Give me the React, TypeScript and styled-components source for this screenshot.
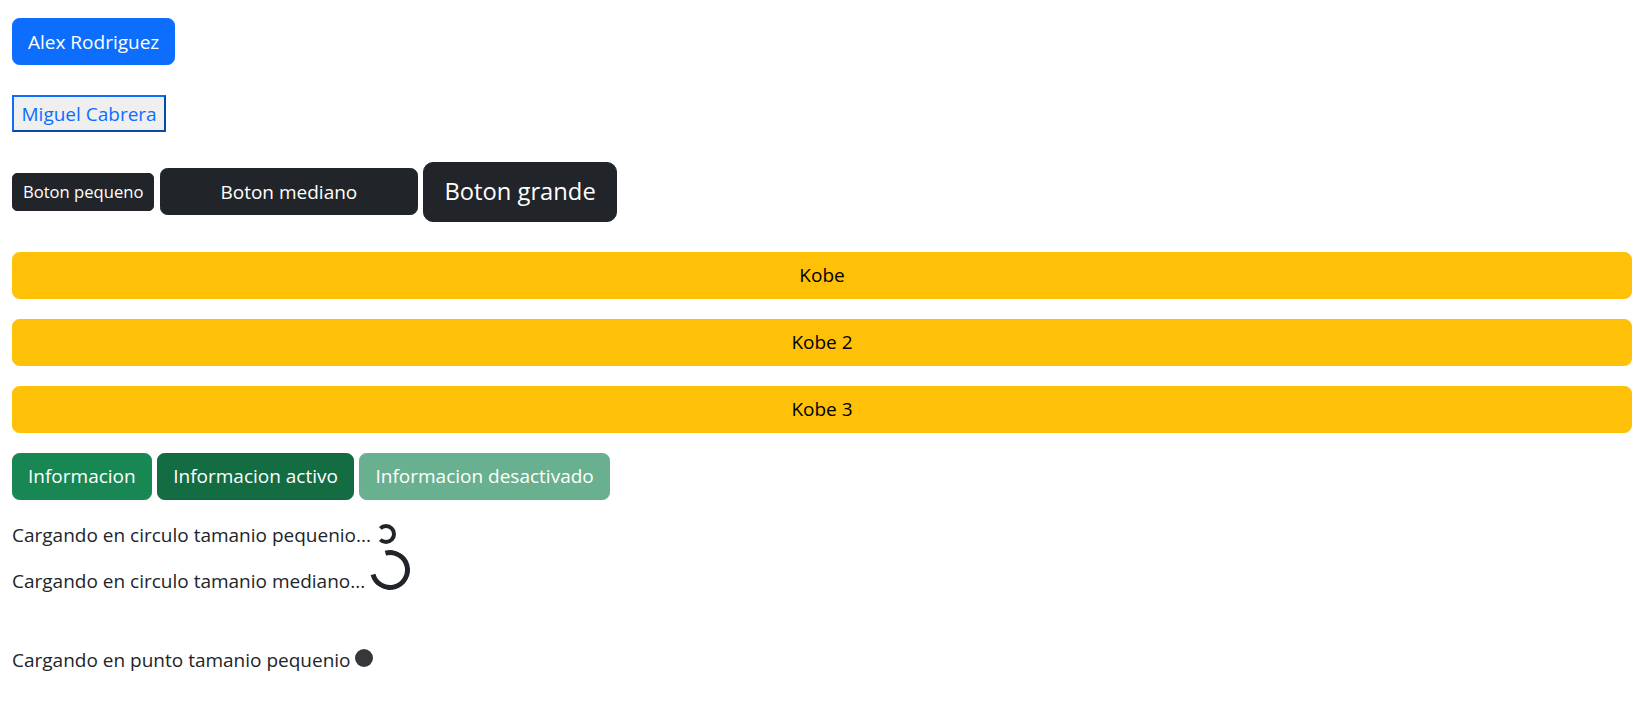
import React from "react";
import styled, { createGlobalStyle, css } from "styled-components";

const GlobalStyle = createGlobalStyle`
  html, body {
    margin: 0;
    padding: 0;
    background: #ffffff;
  }
  body {
    font-family: "Segoe UI", "Open Sans", "Noto Sans", sans-serif;
    font-size: 19px;
    line-height: 30px;
    color: #212529;
  }
  *, *::before, *::after { box-sizing: border-box; }
`;

const Page = styled.div`
  padding: 18px 13px 40px 12px;
  display: flex;
  flex-direction: column;
  align-items: flex-start;
`;

type Variant = "primary" | "dark" | "warning" | "success" | "successActive" | "successDisabled";
type Size = "sm" | "md" | "lg";

const variants: Record<Variant, ReturnType<typeof css>> = {
  primary: css`
    background: #0d6efd;
    border-color: #0d6efd;
    color: #ffffff;
  `,
  dark: css`
    background: #212529;
    border-color: #212529;
    color: #ffffff;
  `,
  warning: css`
    background: #ffc107;
    border-color: #ffc107;
    color: #000000;
  `,
  success: css`
    background: #198754;
    border-color: #198754;
    color: #ffffff;
  `,
  successActive: css`
    background: #146c43;
    border-color: #13653f;
    color: #ffffff;
  `,
  successDisabled: css`
    background: #198754;
    border-color: #198754;
    color: #ffffff;
    opacity: 0.65;
  `,
};

const sizes: Record<Size, ReturnType<typeof css>> = {
  sm: css`
    font-size: 16.6px;
    line-height: 26.25px;
    padding: 5px 10px;
    border-radius: 5px;
  `,
  md: css`
    font-size: 19px;
    line-height: 30px;
    padding: 7.5px 15px;
    border-radius: 7.5px;
  `,
  lg: css`
    font-size: 23.75px;
    line-height: 37.5px;
    padding: 10px 20px;
    border-radius: 10px;
  `,
};

const Btn = styled.button<{ $variant: Variant; $size?: Size; $block?: boolean; $width?: number }>`
  display: ${(p) => (p.$block ? "block" : "inline-block")};
  width: ${(p) => (p.$block ? "100%" : p.$width ? `${p.$width}px` : "auto")};
  font-family: inherit;
  font-weight: 400;
  text-align: center;
  border: 1px solid transparent;
  cursor: pointer;
  margin: 0;
  ${(p) => sizes[p.$size ?? "md"]}
  ${(p) => variants[p.$variant]}
`;

const PlainButton = styled.button`
  font-family: inherit;
  font-size: 19px;
  line-height: 30px;
  padding: 1.5px 7.5px;
  margin: 0;
  background: #efefef;
  color: #0d6efd;
  border: 2px outset #0d6efd;
  border-radius: 0;
`;

const Section = styled.div<{ $mb: number }>`
  margin-bottom: ${(p) => p.$mb}px;
`;

const Row = styled.div<{ $mb: number }>`
  display: flex;
  align-items: center;
  gap: 5.5px;
  margin-bottom: ${(p) => p.$mb}px;
`;

const Stack = styled.div`
  width: 100%;
  display: flex;
  flex-direction: column;
  gap: 20px;
  margin-bottom: 20px;
`;

const TextBlock = styled.div`
  font-size: 19px;
  line-height: 30px;
  color: #212529;
`;

const Line = styled.div<{ $mt?: number }>`
  margin-top: ${(p) => p.$mt ?? 0}px;
`;

const SpinnerBorder = styled.span<{ $size: number; $stroke: number; $rotate: number }>`
  display: inline-block;
  width: ${(p) => p.$size}px;
  height: ${(p) => p.$size}px;
  vertical-align: -2.5px;
  border: ${(p) => p.$stroke}px solid #212529;
  border-right-color: transparent;
  border-radius: 50%;
  transform: rotate(${(p) => p.$rotate}deg);
`;

const SpinnerGrow = styled.span`
  display: inline-block;
  width: 18px;
  height: 18px;
  vertical-align: 0;
  border-radius: 50%;
  background: #36373b;
`;

export default function App() {
  return (
    <>
      <GlobalStyle />
      <Page>
        <Section $mb={30}>
          <Btn $variant="primary">Alex Rodriguez</Btn>
        </Section>
        <Section $mb={30}>
          <PlainButton>Miguel Cabrera</PlainButton>
        </Section>
        <Row $mb={30}>
          <Btn $variant="dark" $size="sm">Boton pequeno</Btn>
          <Btn $variant="dark" $width={258}>Boton mediano</Btn>
          <Btn $variant="dark" $size="lg">Boton grande</Btn>
        </Row>
        <Stack>
          <Btn $variant="warning" $block>Kobe</Btn>
          <Btn $variant="warning" $block>Kobe 2</Btn>
          <Btn $variant="warning" $block>Kobe 3</Btn>
        </Stack>
        <Row $mb={20}>
          <Btn $variant="success">Informacion</Btn>
          <Btn $variant="successActive">Informacion activo</Btn>
          <Btn $variant="successDisabled" disabled>Informacion desactivado</Btn>
        </Row>
        <TextBlock>
          <Line>
            Cargando en circulo tamanio pequenio...{" "}
            <SpinnerBorder $size={20} $stroke={4} $rotate={180} />
          </Line>
          <Line>
            Cargando en circulo tamanio mediano...{" "}
            <SpinnerBorder $size={40} $stroke={5} $rotate={210} />
          </Line>
          <Line $mt={50}>
            Cargando en punto tamanio pequenio <SpinnerGrow />
          </Line>
        </TextBlock>
      </Page>
    </>
  );
}
